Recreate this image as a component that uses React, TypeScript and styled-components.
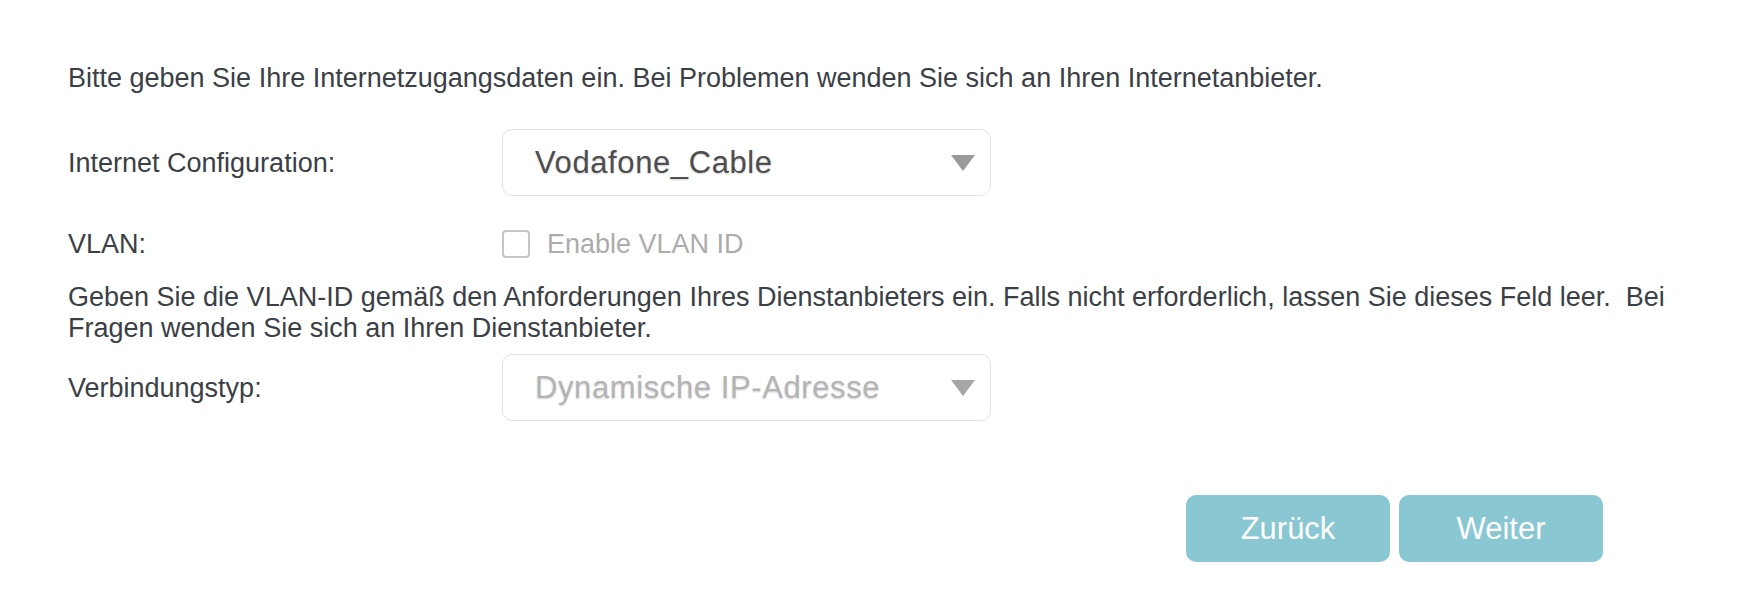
import React from 'react';
import styled, { createGlobalStyle } from 'styled-components';

const GlobalStyle = createGlobalStyle`
  html, body {
    margin: 0;
    padding: 0;
    background: #fff;
  }
  body {
    font-family: "Liberation Sans", Arial, sans-serif;
  }
`;

const Page = styled.div`
  width: 1738px;
  height: 594px;
  box-sizing: border-box;
  padding: 63px 40px 0 68px;
  color: #3b4046;
  font-size: 27px;
`;

const Note = styled.p<{ $top?: number }>`
  margin: ${(p) => p.$top ?? 0}px 0 0;
  line-height: 31px;
  max-width: 1630px;
`;

const Row = styled.div<{ $top: number }>`
  display: flex;
  align-items: center;
  margin-top: ${(p) => p.$top}px;
`;

const Label = styled.div`
  width: 434px;
  flex: none;
  line-height: 30px;
`;

const Select = styled.div<{ $disabled?: boolean }>`
  width: 489px;
  height: 67px;
  box-sizing: border-box;
  border: 1px solid #e2e2e2;
  border-radius: 10px;
  display: flex;
  align-items: center;
  justify-content: space-between;
  padding: 0 15px 0 32px;
  font-size: 31px;
  letter-spacing: 0.6px;
  color: ${(p) => (p.$disabled ? '#b4b4b4' : '#4e4e4e')};
  text-shadow: 0 1px 2px rgba(0, 0, 0, 0.18);
`;

const Arrow = styled.span<{ $disabled?: boolean }>`
  width: 0;
  height: 0;
  border-left: 12px solid transparent;
  border-right: 12px solid transparent;
  border-top: 16px solid ${(p) => (p.$disabled ? '#a6a6a6' : '#999')};
`;

const CheckLine = styled.label`
  display: flex;
  align-items: center;
  gap: 17px;
  color: #acacac;
  line-height: 30px;
`;

const Box = styled.span`
  width: 24px;
  height: 24px;
  border: 2px solid #c4c4c4;
  border-radius: 4px;
  box-sizing: content-box;
`;

const Actions = styled.div`
  display: flex;
  justify-content: flex-end;
  gap: 9px;
  margin-top: 74px;
  padding-right: 95px;
`;

const Button = styled.button`
  width: 204px;
  height: 67px;
  border: none;
  border-radius: 10px;
  background: #89c7d2;
  color: #fff;
  font-family: "Liberation Sans", Arial, sans-serif;
  font-size: 31px;
  cursor: pointer;
`;

const App: React.FC = () => {
  return (
    <>
      <GlobalStyle />
      <Page>
        <Note>
          Bitte geben Sie Ihre Internetzugangsdaten ein. Bei Problemen wenden Sie sich an Ihren Internetanbieter.
        </Note>
        <Row $top={35}>
          <Label>Internet Configuration:</Label>
          <Select>
            <span>Vodafone_Cable</span>
            <Arrow />
          </Select>
        </Row>
        <Row $top={33}>
          <Label>VLAN:</Label>
          <CheckLine>
            <Box />
            Enable VLAN ID
          </CheckLine>
        </Row>
        <Note $top={23}>
          Geben Sie die VLAN-ID gemäß den Anforderungen Ihres Dienstanbieters ein. Falls nicht erforderlich, lassen Sie dieses Feld leer.&nbsp; Bei Fragen wenden Sie sich an Ihren Dienstanbieter.
        </Note>
        <Row $top={10}>
          <Label>Verbindungstyp:</Label>
          <Select $disabled>
            <span>Dynamische IP-Adresse</span>
            <Arrow $disabled />
          </Select>
        </Row>
        <Actions>
          <Button>Zurück</Button>
          <Button>Weiter</Button>
        </Actions>
      </Page>
    </>
  );
};

export default App;
